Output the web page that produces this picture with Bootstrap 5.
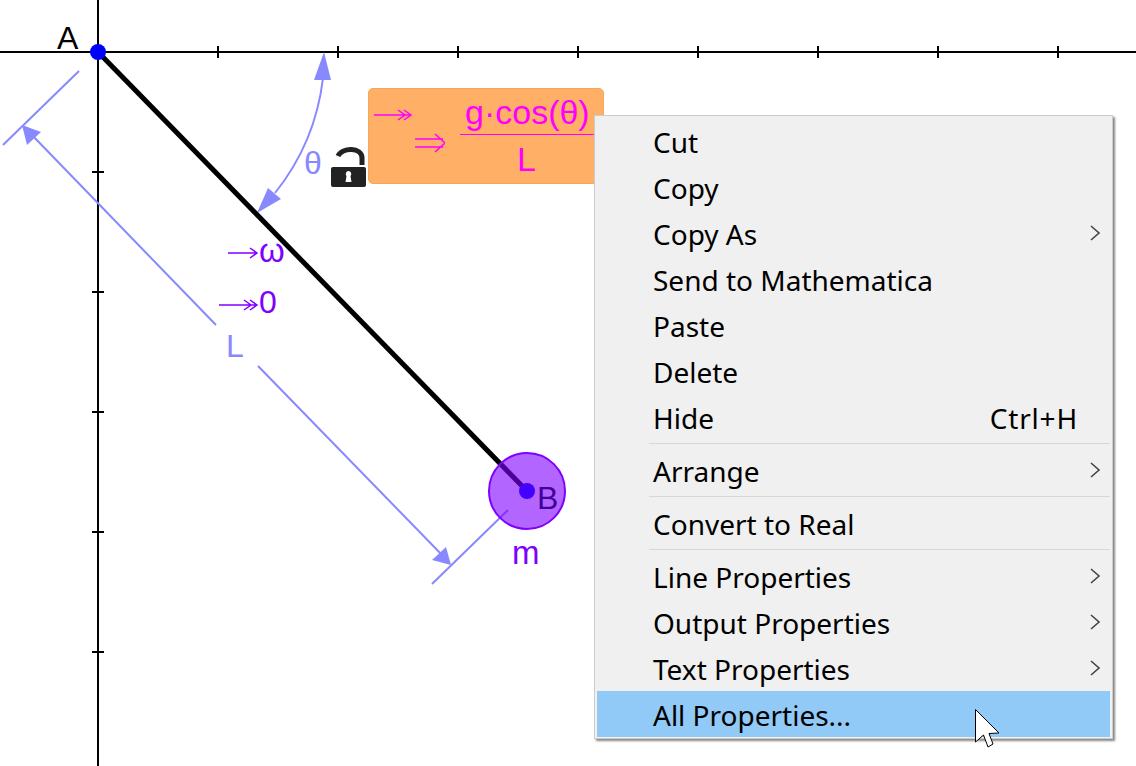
<!DOCTYPE html>
<html lang="en">
<head>
  <meta charset="UTF-8">
  <title>Pendulum</title>
  <link href="https://cdn.jsdelivr.net/npm/bootstrap@5.3.3/dist/css/bootstrap.min.css" rel="stylesheet">
  <script src="https://cdn.jsdelivr.net/npm/bootstrap@5.3.3/dist/js/bootstrap.bundle.min.js"></script>
  <style>
    html, body { height: 100%; overflow: hidden; background: #fff; }
    .sketch { width: 1136px; height: 766px; font-family: "Liberation Sans", sans-serif; }
    .sketch-svg { left: 0; top: 0; }
    .sketch-svg text { font-family: "Liberation Sans", sans-serif; }
    .rule-box {
      left: 368px; top: 88px; width: 236px; height: 96px;
      background: #ffb066; border: 1px solid #f5a858; border-radius: 5px;
      color: #ff00ff;
    }
    .rule-frac { left: 91px; top: 7px; width: 150px; }
    .rule-num { font-size: 34px; line-height: 33px; border-bottom: 1px solid #ff00ff; padding-left: 5px; height: 39px; white-space: nowrap; }
    .rule-den { font-size: 34px; line-height: 48px; padding-left: 57px; }
    .ctx-menu {
      left: 594px; top: 115px; width: 519px; height: 624px;
      --bs-dropdown-padding-y: 2px;
      --bs-dropdown-padding-x: 2px;
      background: #f0f0f0; border: 1px solid #ccc; border-radius: 0;
      box-shadow: 2px 2px 2px #888;
      font-family: "Noto Sans", sans-serif; font-size: 28px; color: #000;
      margin: 0;
    }
    .ctx-item {
      height: 46px; width: 513px; margin-right: 2px;
      padding: 3px 32px 0 56px; line-height: 42px; color: #000;
    }
    .ctx-item:hover, .ctx-item:focus { background: transparent; color: #000; }
    .ctx-item.active-row, .ctx-item.active-row:hover { background: #91c9f7; color: #000; }
    .ctx-sep { margin: 3px 0 3px 52px; width: 461px; border-top: 1px solid #d7d7d7; opacity: 1; }
    .ctx-arrow { margin-right: -23px; margin-top: -4px; }
    .ctx-keys { letter-spacing: .8px; }
    .ctx-pointer { left: 975px; top: 709px; z-index: 1010; }
  </style>
</head>
<body>
<div class="sketch position-relative">
  <svg class="sketch-svg position-absolute" width="1136" height="766" viewBox="0 0 1136 766">
    <!-- axes -->
    <g stroke="#000" stroke-width="2">
      <line x1="0" y1="52" x2="1136" y2="52"/>
      <line x1="98" y1="0" x2="98" y2="766"/>
      <path d="M218 46V58M338 46V58M458 46V58M578 46V58M698 46V58M818 46V58M938 46V58M1058 46V58"/>
      <path d="M92 172H104M92 292H104M92 412H104M92 532H104M92 652H104"/>
    </g>
    <!-- length L -->
    <g stroke="#8888ff" stroke-width="2" fill="none">
      <line x1="79" y1="71" x2="3" y2="145"/>
      <line x1="508" y1="510" x2="432" y2="584"/>
      <line x1="30" y1="133" x2="216" y2="325"/>
      <line x1="258" y1="366" x2="444" y2="557"/>
      <path d="M323 78A226 226 0 0 1 275 193"/>
    </g>
    <g fill="#8888ff">
      <polygon points="22,125 41,132 27,145"/>
      <polygon points="451,565 432,560 446,547"/>
      <polygon points="324,52 314,80 331,80"/>
      <polygon points="257,213 268,188 281,199"/>
      <text x="226" y="357" font-size="32">L</text>
      <text x="304" y="174" font-size="32">θ</text>
    </g>
    <!-- rod and mass -->
    <line x1="98" y1="52" x2="527" y2="491" stroke="#000" stroke-width="5"/>
    <circle cx="527" cy="491" r="38" fill="#8000ff" fill-opacity=".6" stroke="#8000ff" stroke-width="2"/>
    <circle cx="98" cy="52" r="8" fill="#0000ff"/>
    <circle cx="527" cy="491" r="8" fill="#4400ff"/>
    <text x="57" y="49" font-size="32" fill="#000">A</text>
    <text x="537" y="509" font-size="32" fill="#44009a">B</text>
    <text x="512" y="564" font-size="33" fill="#8000ff">m</text>
    <!-- velocity labels -->
    <g stroke="#8000ff" stroke-width="1.5" fill="none">
      <path d="M228 253H257M250 248L257 253L250 258"/>
      <path d="M219 305H257M244 300L251 305L244 310M250 300L257 305L250 310"/>
    </g>
    <text x="259" y="262" font-size="33" fill="#8000ff">ω</text>
    <text x="259" y="313" font-size="32" fill="#8000ff">0</text>
    <!-- lock -->
    <path d="M338 156C342 147 362 147 362 158V165" fill="none" stroke="#222" stroke-width="5"/>
    <rect x="331" y="167" width="35" height="20" rx="2" fill="#222"/>
    <path d="M348.500 171a3 3 0 0 1 2 5l1 6h-6l1-6a3 3 0 0 1 2-5z" fill="#fff"/>
  </svg>

  <div class="rule-box position-absolute">
    <svg class="position-absolute" style="left:4px;top:20px" width="72" height="50" viewBox="0 0 72 50">
      <g stroke="#ff00ff" stroke-width="1.500" fill="none">
        <path d="M1 6H38M25 1L32 6L25 11M31 1L38 6L31 11"/>
        <path d="M42 30H70M42 38H70M62 25L72 34L62 43"/>
      </g>
    </svg>
    <div class="rule-frac position-absolute">
      <div class="rule-num">g·cos(θ)</div>
      <div class="rule-den">L</div>
    </div>
  </div>

  <div class="dropdown-menu show ctx-menu position-absolute">
    <div class="dropdown-item ctx-item d-flex justify-content-between">Cut</div>
    <div class="dropdown-item ctx-item d-flex justify-content-between">Copy</div>
    <div class="dropdown-item ctx-item d-flex justify-content-between">Copy As
      <svg class="ctx-arrow align-self-center" width="12" height="16" viewBox="0 0 12 16"><path d="M2 1L10 8L2 15" fill="none" stroke="#444" stroke-width="1.600"/></svg></div>
    <div class="dropdown-item ctx-item d-flex justify-content-between">Send to Mathematica</div>
    <div class="dropdown-item ctx-item d-flex justify-content-between">Paste</div>
    <div class="dropdown-item ctx-item d-flex justify-content-between">Delete</div>
    <div class="dropdown-item ctx-item d-flex justify-content-between"><span>Hide</span><span class="ctx-keys">Ctrl+H</span></div>
    <hr class="dropdown-divider ctx-sep">
    <div class="dropdown-item ctx-item d-flex justify-content-between">Arrange
      <svg class="ctx-arrow align-self-center" width="12" height="16" viewBox="0 0 12 16"><path d="M2 1L10 8L2 15" fill="none" stroke="#444" stroke-width="1.600"/></svg></div>
    <hr class="dropdown-divider ctx-sep">
    <div class="dropdown-item ctx-item d-flex justify-content-between">Convert to Real</div>
    <hr class="dropdown-divider ctx-sep">
    <div class="dropdown-item ctx-item d-flex justify-content-between">Line Properties
      <svg class="ctx-arrow align-self-center" width="12" height="16" viewBox="0 0 12 16"><path d="M2 1L10 8L2 15" fill="none" stroke="#444" stroke-width="1.600"/></svg></div>
    <div class="dropdown-item ctx-item d-flex justify-content-between">Output Properties
      <svg class="ctx-arrow align-self-center" width="12" height="16" viewBox="0 0 12 16"><path d="M2 1L10 8L2 15" fill="none" stroke="#444" stroke-width="1.600"/></svg></div>
    <div class="dropdown-item ctx-item d-flex justify-content-between">Text Properties
      <svg class="ctx-arrow align-self-center" width="12" height="16" viewBox="0 0 12 16"><path d="M2 1L10 8L2 15" fill="none" stroke="#444" stroke-width="1.600"/></svg></div>
    <div class="dropdown-item ctx-item active-row d-flex justify-content-between">All Properties...</div>
  </div>

  <svg class="ctx-pointer position-absolute" width="28" height="40" viewBox="0 0 28 40">
    <path d="M0.500 0.500L24 24L14 24.500L18 35L13 38L8.500 26L0.500 33Z" fill="#fff" stroke="#000" stroke-width="1"/>
  </svg>
</div>
</body>
</html>
